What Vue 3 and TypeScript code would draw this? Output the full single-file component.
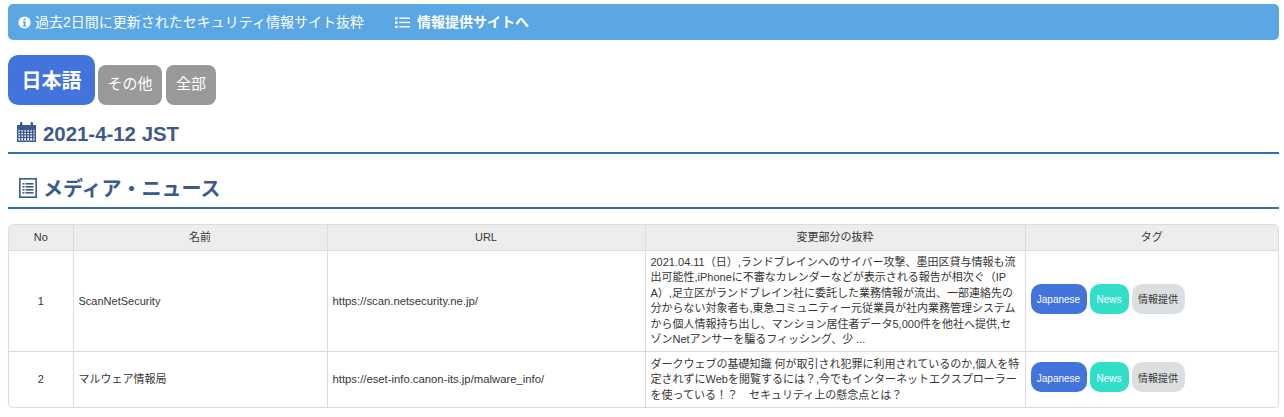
<script setup lang="ts">
interface Row { no: number; name: string; url: string; excerpt: string }
const rows: Row[] = [
  {
    no: 1,
    name: 'ScanNetSecurity',
    url: 'https://scan.netsecurity.ne.jp/',
    excerpt: '2021.04.11（日）,ランドブレインへのサイバー攻撃、墨田区貸与情報も流出可能性,iPhoneに不審なカレンダーなどが表示される報告が相次ぐ（IPA）,足立区がランドブレイン社に委託した業務情報が流出、一部連絡先の分からない対象者も,東急コミュニティー元従業員が社内業務管理システムから個人情報持ち出し、マンション居住者データ5,000件を他社へ提供,セゾンNetアンサーを騙るフィッシング、少 ...',
  },
  {
    no: 2,
    name: 'マルウェア情報局',
    url: 'https://eset-info.canon-its.jp/malware_info/',
    excerpt: 'ダークウェブの基礎知識 何が取引され犯罪に利用されているのか,個人を特定されずにWebを閲覧するには？,今でもインターネットエクスプローラーを使っている！？　セキュリティ上の懸念点とは？',
  },
]
</script>

<template>
  <div class="page">
    <div class="notice">
      <svg class="ico-info" viewBox="0 0 16 16" width="13" height="13">
        <circle cx="8" cy="8" r="7.5" fill="#fff" />
        <rect x="6.9" y="3" width="2.4" height="2.3" rx=".5" fill="#5aa7e4" />
        <path d="M5.9 6.6h3.4v5h1v1.5H5.9v-1.5h1v-3.500h-1z" fill="#5aa7e4" />
      </svg>
      <span class="notice-text">過去2日間に更新されたセキュリティ情報サイト抜粋</span>
      <a class="notice-link">
        <svg viewBox="0 0 14 12" width="15" height="13">
          <g fill="#fff">
            <rect x="0" y="1" width="2.4" height="2.2" />
            <rect x="0" y="5" width="2.4" height="2.2" />
            <rect x="0" y="9" width="2.4" height="2.2" />
            <rect x="4" y="1.3" width="10" height="1.3" />
            <rect x="4" y="5.3" width="10" height="1.3" />
            <rect x="4" y="9.3" width="10" height="1.3" />
          </g>
        </svg>
        <b>情報提供サイトへ</b>
      </a>
    </div>

    <div class="langs">
      <button class="lang active">日本語</button>
      <button class="lang">その他</button>
      <button class="lang">全部</button>
    </div>

    <h2 class="heading date">
      <svg viewBox="0 0 19 20" width="19" height="20">
        <path fill="#3b5a8c" d="M0 3h3V1.2C3 .5 3.5 0 4.200 0S5.400.5 5.400 1.200V3h8.200V1.200c0-.7.5-1.200 1.200-1.200S16 .5 16 1.200V3h3v17H0z" />
        <rect x="1.500" y="7" width="16" height="11.500" fill="#fff" />
        <g fill="#3b5a8c">
          <rect x="1.500" y="7" width="16" height="1.300" />
          <rect x="1.500" y="9.600" width="16" height="1.300" />
          <rect x="1.500" y="12.200" width="16" height="1.300" />
          <rect x="1.500" y="14.800" width="16" height="1.300" />
          <rect x="3" y="7" width="1.300" height="11.500" />
          <rect x="6" y="7" width="1.300" height="11.500" />
          <rect x="9" y="7" width="1.300" height="11.500" />
          <rect x="12" y="7" width="1.300" height="11.500" />
          <rect x="15" y="7" width="1.300" height="11.500" />
        </g>
      </svg>
      <span class="date-text">2021-4-12 JST</span>
    </h2>

    <h2 class="heading media">
      <svg viewBox="0 0 18 20" width="18" height="20">
        <rect x=".8" y=".8" width="16.400" height="18.400" fill="#fff" stroke="#3b5a8c" stroke-width="1.600" />
        <g fill="#3b5a8c">
          <rect x="3.500" y="5" width="2" height="1.600" />
          <rect x="3.500" y="8" width="2" height="1.600" />
          <rect x="3.500" y="11" width="2" height="1.600" />
          <rect x="3.500" y="14" width="2" height="1.600" />
          <rect x="6.500" y="5" width="8" height="1.600" />
          <rect x="6.500" y="8" width="8" height="1.600" />
          <rect x="6.500" y="11" width="8" height="1.600" />
          <rect x="6.500" y="14" width="8" height="1.600" />
        </g>
      </svg>
      <span>メディア・ニュース</span>
    </h2>

    <div class="table-wrap">
      <table>
        <colgroup>
          <col class="c1" /><col class="c2" /><col class="c3" /><col class="c4" /><col />
        </colgroup>
        <thead>
          <tr>
            <th>No</th><th>名前</th><th>URL</th><th>変更部分の抜粋</th><th>タグ</th>
          </tr>
        </thead>
        <tbody>
          <tr v-for="r in rows" :key="r.no">
            <td class="center">{{ r.no }}</td>
            <td>{{ r.name }}</td>
            <td class="url">{{ r.url }}</td>
            <td class="excerpt">{{ r.excerpt }}</td>
            <td class="tag-cell">
              <div class="tags">
                <span class="tag blue">Japanese</span>
                <span class="tag teal">News</span>
                <span class="tag grey">情報提供</span>
              </div>
            </td>
          </tr>
        </tbody>
      </table>
    </div>
  </div>
</template>

<style>
html, body { margin: 0; background: #fff; }
</style>

<style scoped>
.page {
  padding: 4px 5px 0 8px;
  font-family: "Liberation Sans", "Noto Sans CJK JP", sans-serif;
  color: #363636;
}
.notice {
  height: 36px;
  box-sizing: border-box;
  background: #5aa7e4;
  border-radius: 5px;
  display: flex;
  align-items: center;
  padding-left: 10px;
  color: #fff;
  font-size: 14px;
}
.notice-text { margin-left: 4px; padding-bottom: 3px; }
.notice-link { margin-left: 31px; display: flex; align-items: center; gap: 7px; }
.notice-link b { padding-bottom: 3px; }
.langs { display: flex; align-items: flex-end; gap: 3px; margin-top: 15px; }
.lang {
  border: 0;
  padding: 0 0 5px;
  font-family: inherit;
  color: #fff;
  background: #999;
  height: 40px;
  border-radius: 8px;
  font-size: 15px;
  width: 61px;
}
.lang:nth-child(2) { width: 64px; }
.lang:nth-child(3) { width: 50px; margin-left: 1px; }
.lang.active {
  background: #4374db;
  width: 87px;
  height: 50px;
  padding-bottom: 2px;
  font-size: 20px;
  font-weight: 700;
  border-radius: 10px;
}
.heading {
  margin: 0;
  display: flex;
  align-items: center;
  color: #3b5a8c;
  border-bottom: 2px solid #3273ae;
  box-sizing: border-box;
  font-weight: 700;
  font-size: 20px;
  gap: 6px;
}
.heading.date {
  height: 49px;
  padding: 6px 0 0 9px;
  gap: 7px;
}
.date-text { margin-top: 5px; font-size: 20.400px; }
.heading.media {
  height: 55px;
  padding: 14px 0 0 11px;
}
.table-wrap {
  margin-top: 15px;
  border: 1px solid #dcdcdc;
  border-radius: 5px;
  overflow: hidden;
  box-shadow: 0 1px 1px rgba(0, 0, 0, .06);
}
table {
  width: 100%;
  border-collapse: collapse;
  table-layout: fixed;
  font-size: 11px;
}
.c1 { width: 64px; }
.c2 { width: 254px; }
.c3 { width: 318px; }
.c4 { width: 380px; }
th, td {
  border-left: 1px solid #dcdcdc;
  border-top: 1px solid #dcdcdc;
  padding: 4px 5px;
  text-align: left;
  vertical-align: middle;
  line-height: 15.4px;
  font-weight: 400;
}
th:first-child, td:first-child { border-left: 0; }
thead th {
  border-top: 0;
  background: #ededed;
  text-align: center;
  height: 17px;
}
.center { text-align: center; }
.url { font-size: 11.300px; }
.excerpt { word-break: break-all; }
.tags { display: flex; gap: 3px; padding: 6px 0 11px; }
.tag {
  height: 30px;
  padding-top: 2px;
  display: flex;
  align-items: center;
  justify-content: center;
  border-radius: 10px;
  font-size: 10px;
  box-sizing: border-box;
}
.blue { background: #4374db; color: #fff; width: 56px; }
.teal { background: #33dec9; color: #fff; width: 39px; }
.grey { background: #dcdfe2; color: #363636; width: 53px; }
</style>
